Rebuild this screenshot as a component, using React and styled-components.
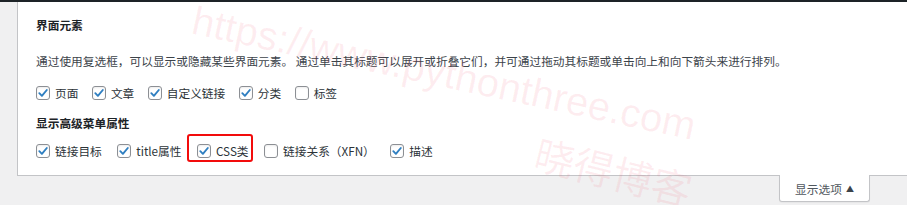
import styled, { createGlobalStyle } from "styled-components";

const GlobalStyle = createGlobalStyle`
  html, body {
    margin: 0;
    padding: 0;
    background: #f0f0f1;
    font-family: "Noto Sans CJK SC", "Noto Sans", sans-serif;
    font-size: 11.7px;
    color: #3c434a;
    overflow: hidden;
  }
`;

const firstRow = [
  { label: "页面", checked: true },
  { label: "文章", checked: true },
  { label: "自定义链接", checked: true },
  { label: "分类", checked: true },
  { label: "标签", checked: false },
];

const secondRow = [
  { label: "链接目标", checked: true },
  { label: "title属性", checked: true },
  { label: "CSS类", checked: true, marked: true },
  { label: "链接关系（XFN）", checked: false },
  { label: "描述", checked: true },
];

const Check = ({ checked }) => (
  <Box>
    {checked && (
      <svg width="12" height="12" viewBox="0 0 12 12">
        <path d="M2.3 6.2 L4.9 8.8 L9.8 3" fill="none" stroke="#2f7fc1" strokeWidth="1.9" strokeLinecap="round" strokeLinejoin="round" />
      </svg>
    )}
  </Box>
);

const Options = ({ items, gap, top }) => (
  <Row $gap={gap} $top={top}>
    {items.map((it, i) => (
      <Item key={i} $marked={it.marked}>
        <Check checked={it.checked} />
        <span>{it.label}</span>
      </Item>
    ))}
  </Row>
);

const App = () => {
  return (
    <Page>
      <GlobalStyle />
      <TopBar />
      <Panel>
        <Heading>界面元素</Heading>
        <Desc>通过使用复选框，可以显示或隐藏某些界面元素。 通过单击其标题可以展开或折叠它们，并可通过拖动其标题或单击向上和向下箭头来进行排列。</Desc>
        <Options items={firstRow} gap={13.5} top={0} />
        <Heading $top={10}>显示高级菜单属性</Heading>
        <Options items={secondRow} gap={15.5} top={8} />
      </Panel>
      <TabBar>
        <Tab>
          显示选项 <Arrow>▲</Arrow>
        </Tab>
      </TabBar>
      <Mark>https://www.pythonthree.com</Mark>
      <MarkCn>晓得博客</MarkCn>
    </Page>
  );
};

export default App;

const Page = styled.div`
  position: relative;
  width: 907px;
  height: 205px;
  overflow: hidden;
`;

const TopBar = styled.div`
  height: 2px;
  background: #1d2327;
`;

const Panel = styled.div`
  margin-left: 17px;
  background: #fff;
  border-left: 1px solid #c3c4c7;
  border-bottom: 1px solid #c3c4c7;
  padding: 13px 0 14px 18px;
`;

const Heading = styled.div`
  margin-top: ${(p) => p.$top || 0}px;
  height: 20px;
  line-height: 20px;
  font-weight: 700;
  color: #1d2327;
`;

const Desc = styled.div`
  margin-top: 16px;
  margin-bottom: 12px;
  height: 20px;
  line-height: 20px;
  white-space: nowrap;
  color: #3c434a;
`;

const Row = styled.div`
  display: flex;
  align-items: center;
  gap: ${(p) => p.$gap}px;
  margin-top: ${(p) => p.$top}px;
`;

const Item = styled.label`
  position: relative;
  display: flex;
  align-items: center;
  gap: 5px;
  height: 20px;
  line-height: 20px;
  white-space: nowrap;
  color: #2c3338;

  ${(p) =>
    p.$marked &&
    `
    &::after {
      content: "";
      position: absolute;
      left: -10px;
      top: -7px;
      width: 62px;
      height: 24px;
      border: 2.5px solid #f20c0c;
      border-radius: 3px;
    }
  `}
`;

const Box = styled.span`
  box-sizing: border-box;
  width: 14px;
  height: 14px;
  border: 1px solid #8c8f94;
  border-radius: 3px;
  background: #fff;
  box-shadow: inset 0 1px 2px rgba(0, 0, 0, 0.08);
  display: flex;
  align-items: center;
  justify-content: center;
`;

const TabBar = styled.div`
  display: flex;
  justify-content: flex-end;
  padding-right: 37px;
`;

const Tab = styled.div`
  margin-top: -1px;
  box-sizing: border-box;
  width: 91px;
  height: 27px;
  background: #fff;
  border: 1px solid #c3c4c7;
  border-top: none;
  border-radius: 0 0 3px 3px;
  box-shadow: 0 1px 1px rgba(0, 0, 0, 0.04);
  display: flex;
  align-items: center;
  justify-content: center;
  gap: 4px;
  color: #50575e;
  white-space: nowrap;
`;

const Arrow = styled.span`
  font-size: 8px;
  color: #3c434a;
`;

const Mark = styled.span`
  position: absolute;
  left: 197px;
  top: 0;
  font-family: "Liberation Sans", Arial, sans-serif;
  font-size: 40px;
  line-height: 1;
  color: rgba(240, 60, 90, 0.09);
  transform: rotate(12deg);
  transform-origin: 0 0;
  white-space: nowrap;
  pointer-events: none;
`;

const MarkCn = styled.span`
  position: absolute;
  left: 541px;
  top: 132px;
  font-family: "Noto Sans CJK SC", sans-serif;
  font-size: 40px;
  line-height: 1;
  color: rgba(240, 60, 90, 0.09);
  transform: rotate(14deg);
  transform-origin: 0 0;
  white-space: nowrap;
  pointer-events: none;
`;
